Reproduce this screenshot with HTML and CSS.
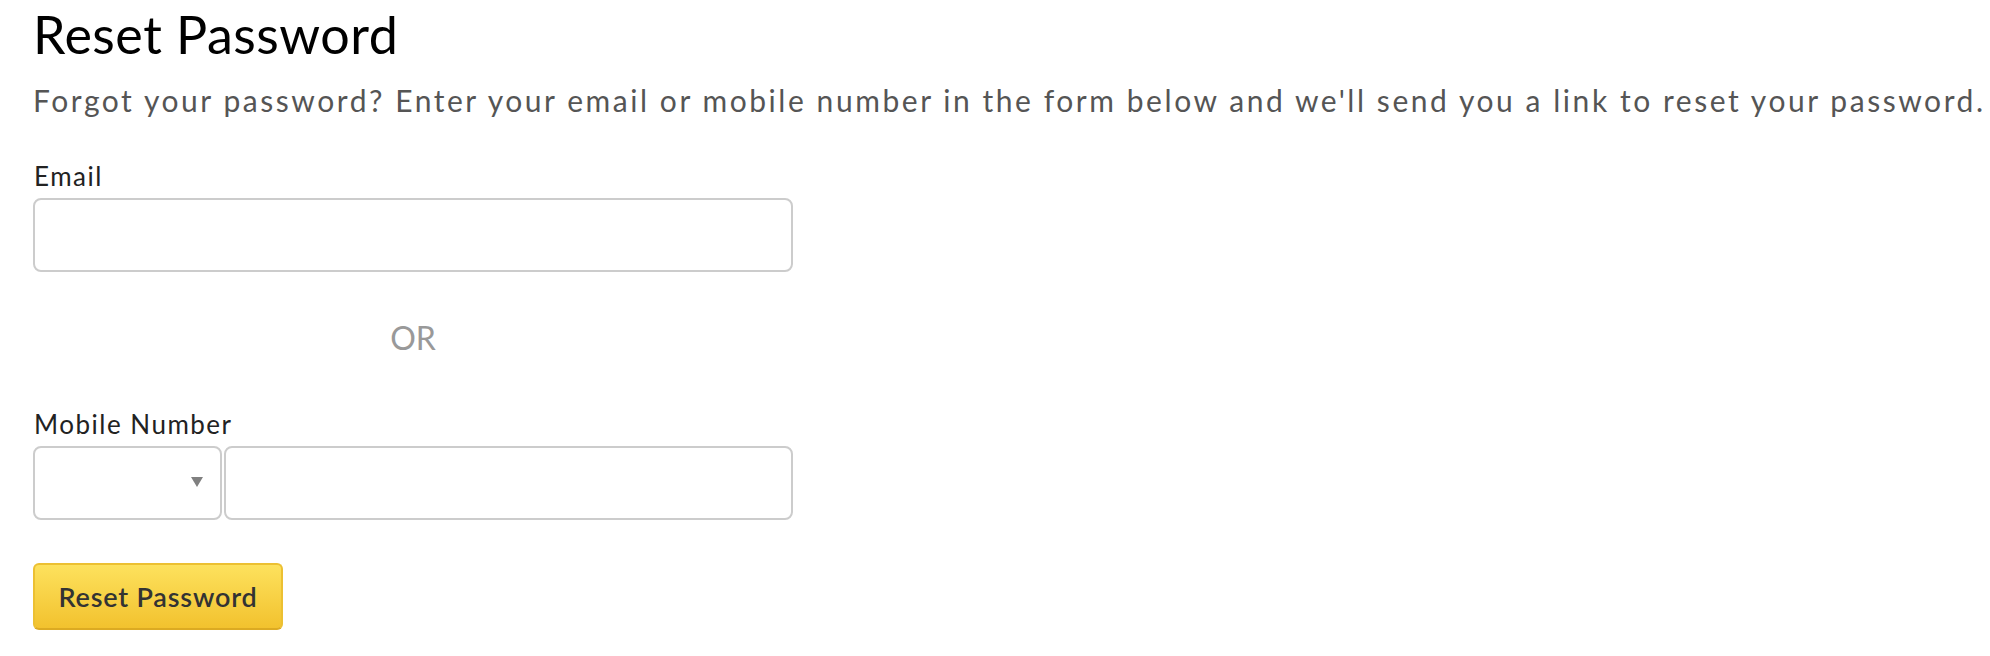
FILE: index.html
```html
<!DOCTYPE html>
<html lang="en">
<head>
    <meta charset="UTF-8">
    <meta name="viewport" content="width=device-width, initial-scale=1.0">
    <title>Reset Password</title>
    <link rel="stylesheet" href="styles.css">
</head>
<body>
    <div class="container">
        <h1>Reset Password</h1>
        <p class="intro">Forgot your password? Enter your email or mobile number in the form below and we'll send you a link to reset your password.</p>

        <form class="reset-form">
            <label for="email">Email</label>
            <input type="text" id="email" class="field">

            <div class="or">OR</div>

            <label for="mobile">Mobile Number</label>
            <div class="phone-row">
                <div class="select-box">
                    <span class="arrow"></span>
                </div>
                <input type="text" id="mobile" class="field phone">
            </div>

            <button type="button" class="btn-reset">Reset Password</button>
        </form>
    </div>
</body>
</html>
```

FILE: styles.css
```css
body {
    font-family: Lato, 'Noto Sans', sans-serif;
    background: #ffffff;
    color: #222222;
    margin: 0;
    padding: 0;
}

.container {
    padding: 3px 0 0 33px;
}

h1 {
    margin: 0;
    font-size: 52px;
    line-height: 62px;
    font-weight: 400;
    letter-spacing: 0.5px;
    color: #000000;
}

.intro {
    margin: 15px 0 0 0;
    font-size: 30px;
    line-height: 40px;
    letter-spacing: 2.55px;
    color: #555555;
    white-space: nowrap;
}

.reset-form {
    width: 760px;
}

label {
    display: block;
    margin: 39px 0 5px 1px;
    font-size: 26px;
    line-height: 34px;
    letter-spacing: 1.5px;
    color: #222222;
}

.field {
    display: block;
    box-sizing: border-box;
    width: 760px;
    height: 74px;
    margin: 0;
    border: 2px solid #cccccc;
    border-radius: 8px;
    background: #ffffff;
    font-size: 26px;
    padding: 0 16px;
}

.or {
    margin-top: 46px;
    font-size: 32px;
    line-height: 40px;
    text-align: center;
    color: #999999;
}

.or + label {
    margin-top: 49px;
}

.phone-row {
    display: flex;
    gap: 2px;
}

.select-box {
    position: relative;
    box-sizing: border-box;
    width: 189px;
    height: 74px;
    border: 2px solid #cccccc;
    border-radius: 8px;
}

.arrow {
    position: absolute;
    right: 17px;
    top: 29px;
    width: 0;
    height: 0;
    border-left: 6px solid transparent;
    border-right: 6px solid transparent;
    border-top: 10px solid #808080;
}

.field.phone {
    flex: 1;
    width: auto;
}

.btn-reset {
    display: block;
    box-sizing: border-box;
    margin-top: 43px;
    width: 250px;
    height: 67px;
    border: 2px solid #ecc032;
    border-bottom-color: #dcaa22;
    border-radius: 6px;
    background: linear-gradient(to bottom, #fde15d, #f2c22e);
    font-family: Lato, 'Noto Sans', sans-serif;
    font-size: 27px;
    font-weight: 600;
    letter-spacing: 0.8px;
    color: #333333;
    padding: 0;
    cursor: pointer;
}
```
